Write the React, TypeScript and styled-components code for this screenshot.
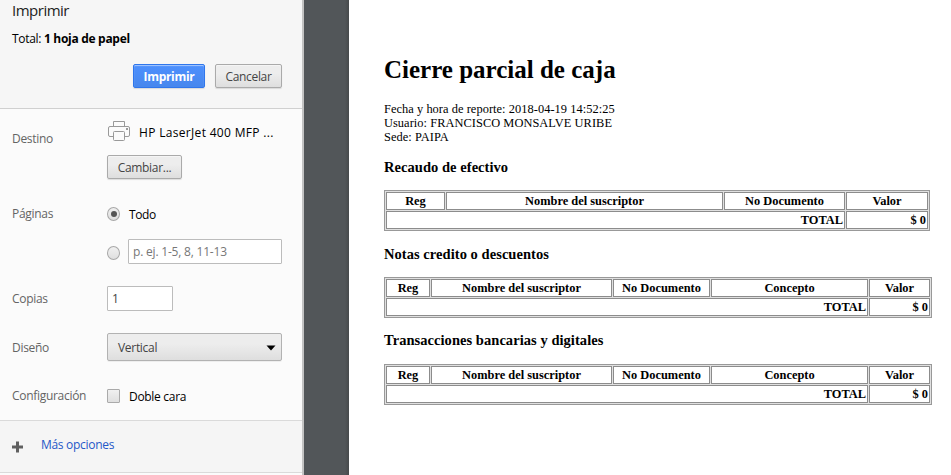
import React from "react";
import styled, { createGlobalStyle } from "styled-components";

const Global = createGlobalStyle`
  * { box-sizing: border-box; }
  html, body { margin: 0; padding: 0; overflow: hidden; background: #fff; }
`;

const Page = styled.div`
  display: flex;
  width: 951px;
  height: 475px;
  overflow: hidden;
`;

const Sidebar = styled.aside`
  display: flex;
  flex-direction: column;
  flex: none;
  width: 304px;
  border-right: 2px solid #c3c3c3;
  background: #fbfbfb;
  font: 12px/16px "Open Sans", "Noto Sans", sans-serif;
  color: #000;
`;

const Header = styled.header`
  flex: none;
  height: 109px;
  padding: 0 20px 0 12px;
  border-bottom: 1px solid #d0d0d0;
  background: #f6f6f6;
`;

const Title = styled.h1`
  margin: 0;
  font-size: 15px;
  font-weight: 400;
  line-height: 20px;
  letter-spacing: -0.5px;
  color: #222;
`;

const Text = styled.span<{ $track?: number }>`
  letter-spacing: ${(p) => p.$track ?? -0.3}px;
  white-space: nowrap;
`;

const Total = styled.p`
  margin: 11px 0 0;
`;

const Actions = styled.div`
  display: flex;
  justify-content: flex-end;
  gap: 10px;
  margin-top: 17px;
`;

const Button = styled.button<{ $primary?: boolean; $width: number }>`
  width: ${(p) => p.$width}px;
  height: 24px;
  padding: 1px 0 0;
  border: 1px solid ${(p) => (p.$primary ? "#2f76ec" : "#aaa")};
  border-radius: 2px;
  background: ${(p) => (p.$primary ? "linear-gradient(#4d90fe, #4787ed)" : "linear-gradient(#ededed 38%, #dedede)")};
  box-shadow: 0 1px 1px rgba(0, 0, 0, 0.12), inset 0 1px 1px rgba(255, 255, 255, 0.5);
  font: ${(p) => (p.$primary ? 700 : 400)} 12px/20px "Open Sans", sans-serif;
  color: ${(p) => (p.$primary ? "#fff" : "#444")};
`;

const Settings = styled.div`
  flex: none;
  height: 311px;
`;

const Row = styled.div<{ $height: number; $offset?: number }>`
  display: grid;
  grid-template-columns: 95px 175px;
  height: ${(p) => p.$height}px;
  padding: ${(p) => p.$offset ?? 0}px 0 0 12px;
`;

const Label = styled.div<{ $drop?: number }>`
  padding-top: ${(p) => p.$drop ?? 0}px;
  color: #646464;
`;

const Destination = styled.div`
  display: flex;
  height: 24px;
  margin-bottom: 11px;
  gap: 8px;
  line-height: 26px;
`;

const Option = styled.label`
  display: flex;
  align-items: center;
  height: 26px;
  gap: 8px;
  line-height: 18px;
`;

const OptionText = styled(Text)`
  padding: 2px 0 0 1px;
`;

const Radio = styled.span`
  display: grid;
  place-items: center;
  flex: none;
  width: 13px;
  height: 14px;
  border: 1px solid #a8a8a8;
  border-radius: 50%;
  background: linear-gradient(#f0f0f0, #dfdfdf);
`;

const Dot = styled.span`
  width: 6px;
  height: 6px;
  border-radius: 50%;
  background: #555;
`;

const Checkbox = styled.span`
  flex: none;
  width: 13px;
  height: 14px;
  border: 1px solid #aaa;
  border-radius: 1px;
  background: linear-gradient(#f0f0f0, #dfdfdf);
`;

const Field = styled.span<{ $width: number; $muted?: boolean }>`
  display: block;
  flex: none;
  width: ${(p) => p.$width}px;
  height: 25px;
  padding: 4px 4px 0;
  border: 1px solid #bcbcbc;
  border-radius: 1px;
  background: #fff;
  line-height: 16px;
  color: ${(p) => (p.$muted ? "#777" : "#444")};
`;

const RangeOption = styled(Option)`
  align-items: flex-start;
  ${Radio} { margin-top: 7px; }
`;

const PageOptions = styled.div`
  display: flex;
  flex-direction: column;
  gap: 12px;
`;

const Select = styled.div`
  display: flex;
  align-items: center;
  justify-content: space-between;
  height: 28px;
  padding: 1px 5px 0 10px;
  border: 1px solid #b2b2b2;
  border-radius: 2px;
  background: linear-gradient(#ededed 38%, #dedede);
  box-shadow: 0 1px 0 rgba(0, 0, 0, 0.05);
  line-height: 17px;
  color: #444;
`;

const More = styled.div`
  display: flex;
  flex: none;
  gap: 18px;
  height: 53px;
  padding: 16px 11px 0;
  border-top: 1px solid #dadada;
  border-bottom: 1px solid #dadada;
  background: #f5f5f5;
  color: #2558c8;
  svg { margin-top: 4px; }
`;

const Gutter = styled.div`
  flex: none;
  width: 45px;
  background: linear-gradient(to right, #525659 41px, #474a4c);
`;

const Sheet = styled.main`
  flex: 1;
  padding: 55px 0 0 35px;
  background: #fff;
  font-family: "Liberation Serif", serif;
  color: #000;
`;

const ReportTitle = styled.h1`
  margin: 0;
  font-size: 25px;
  line-height: 30px;
  letter-spacing: 0;
`;

const Details = styled.div`
  margin-top: 17px;
  font-size: 12.4px;
  line-height: 14px;
  letter-spacing: 0.05px;
`;

const SectionTitle = styled.h3`
  margin: 14px 0 0;
  font-size: 14.5px;
  line-height: 18px;
  letter-spacing: 0.05px;
`;

const Table = styled.div<{ $columns: string }>`
  display: grid;
  grid-template-columns: ${(p) => p.$columns};
  grid-template-rows: 18px 18px;
  gap: 1px;
  width: max-content;
  height: 41px;
  margin-top: 14px;
  padding: 1px;
  border: 1px solid #999;
  background: #e0e0e0;
  font-size: 12.4px;
  font-weight: 700;
  white-space: nowrap;

  & + ${SectionTitle} ~ ${SectionTitle} {
    margin-top: 13px;
  }

  & ~ & ~ & {
    margin-top: 15px;
  }
`;

const Cell = styled.div<{ $right?: boolean; $span?: number }>`
  grid-column: span ${(p) => p.$span ?? 1};
  padding: 0 1px;
  border: 1px solid #8c8c8c;
  background: #fff;
  line-height: ${(p) => (p.$right ? 16 : 17)}px;
  text-align: ${(p) => (p.$right ? "right" : "center")};
`;

const PrinterIcon = () => (
  <svg width="24" height="22" viewBox="0 0 24 22" fill="#fbfbfb" stroke="#999">
    <path d="M6.5 7V1.5h11V7" />
    <rect x="1.5" y="6.500" width="21" height="10" rx="1.500" />
    <path d="M6.500 16v3.500a1 1 0 0 0 1 1h9a1 1 0 0 0 1-1v-7a1 1 0 0 0-1-1h-9a1 1 0 0 0-1 1z" />
    <path d="M19 9h2" strokeWidth="2" />
  </svg>
);

type ReportTableProps = { columns: string; headings: string[] };

const ReportTable = ({ columns, headings }: ReportTableProps) => (
  <Table $columns={columns}>
    {headings.map((h) => <Cell key={h}>{h}</Cell>)}
    <Cell $span={headings.length - 1} $right>TOTAL</Cell>
    <Cell $right>$ 0</Cell>
  </Table>
);

const wideColumns = "44px 181px 97px 157px 61px";
const wideHeadings = ["Reg", "Nombre del suscriptor", "No Documento", "Concepto", "Valor"];

export default function App() {
  return (
    <>
      <Global />
      <Page>
        <Sidebar>
          <Header>
            <Title>Imprimir</Title>
            <Total><Text>Total: <b>1 hoja de papel</b></Text></Total>
            <Actions>
              <Button $primary $width={72}><Text>Imprimir</Text></Button>
              <Button $width={67}><Text $track={-0.35}>Cancelar</Text></Button>
            </Actions>
          </Header>
          <Settings>
            <Row $height={92} $offset={11}>
              <Label $drop={11}><Text>Destino</Text></Label>
              <div>
                <Destination><PrinterIcon /><Text $track={0.32}>HP LaserJet 400 MFP ...</Text></Destination>
                <Button $width={75}><Text>Cambiar...</Text></Button>
              </div>
            </Row>
            <Row $height={85}>
              <Label $drop={5}><Text>Páginas</Text></Label>
              <PageOptions>
                <Option><Radio><Dot /></Radio><OptionText $track={-0.4}>Todo</OptionText></Option>
                <RangeOption><Radio /><Field $width={154} $muted><Text $track={-0.2}>p. ej. 1-5, 8, 11-13</Text></Field></RangeOption>
              </PageOptions>
            </Row>
            <Row $height={47}>
              <Label $drop={5}><Text>Copias</Text></Label>
              <Field $width={66}><Text>1</Text></Field>
            </Row>
            <Row $height={50}>
              <Label $drop={7}><Text>Diseño</Text></Label>
              <Select>
                <Text>Vertical</Text>
                <svg width="10" height="6" viewBox="0 0 10 6"><path d="M0.500 0.500h9L5 5.500z" fill="#000" /></svg>
              </Select>
            </Row>
            <Row $height={37}>
              <Label $drop={5}><Text>Configuración</Text></Label>
              <Option><Checkbox /><OptionText>Doble cara</OptionText></Option>
            </Row>
          </Settings>
          <More>
            <svg width="12" height="12" viewBox="0 0 12 12"><path d="M6.500 .5v11M1 6h11" stroke="#606060" strokeWidth="3" /></svg>
            <Text>Más opciones</Text>
          </More>
        </Sidebar>
        <Gutter />
        <Sheet>
          <ReportTitle>Cierre parcial de caja</ReportTitle>
          <Details>
            <div>Fecha y hora de reporte: 2018-04-19 14:52:25</div>
            <div>Usuario: FRANCISCO MONSALVE URIBE</div>
            <div>Sede: PAIPA</div>
          </Details>
          <SectionTitle>Recaudo de efectivo</SectionTitle>
          <ReportTable
            columns="59px 277px 121px 82px"
            headings={["Reg", "Nombre del suscriptor", "No Documento", "Valor"]}
          />
          <SectionTitle>Notas credito o descuentos</SectionTitle>
          <ReportTable columns={wideColumns} headings={wideHeadings} />
          <SectionTitle>Transacciones bancarias y digitales</SectionTitle>
          <ReportTable columns={wideColumns} headings={wideHeadings} />
        </Sheet>
      </Page>
    </>
  );
}
